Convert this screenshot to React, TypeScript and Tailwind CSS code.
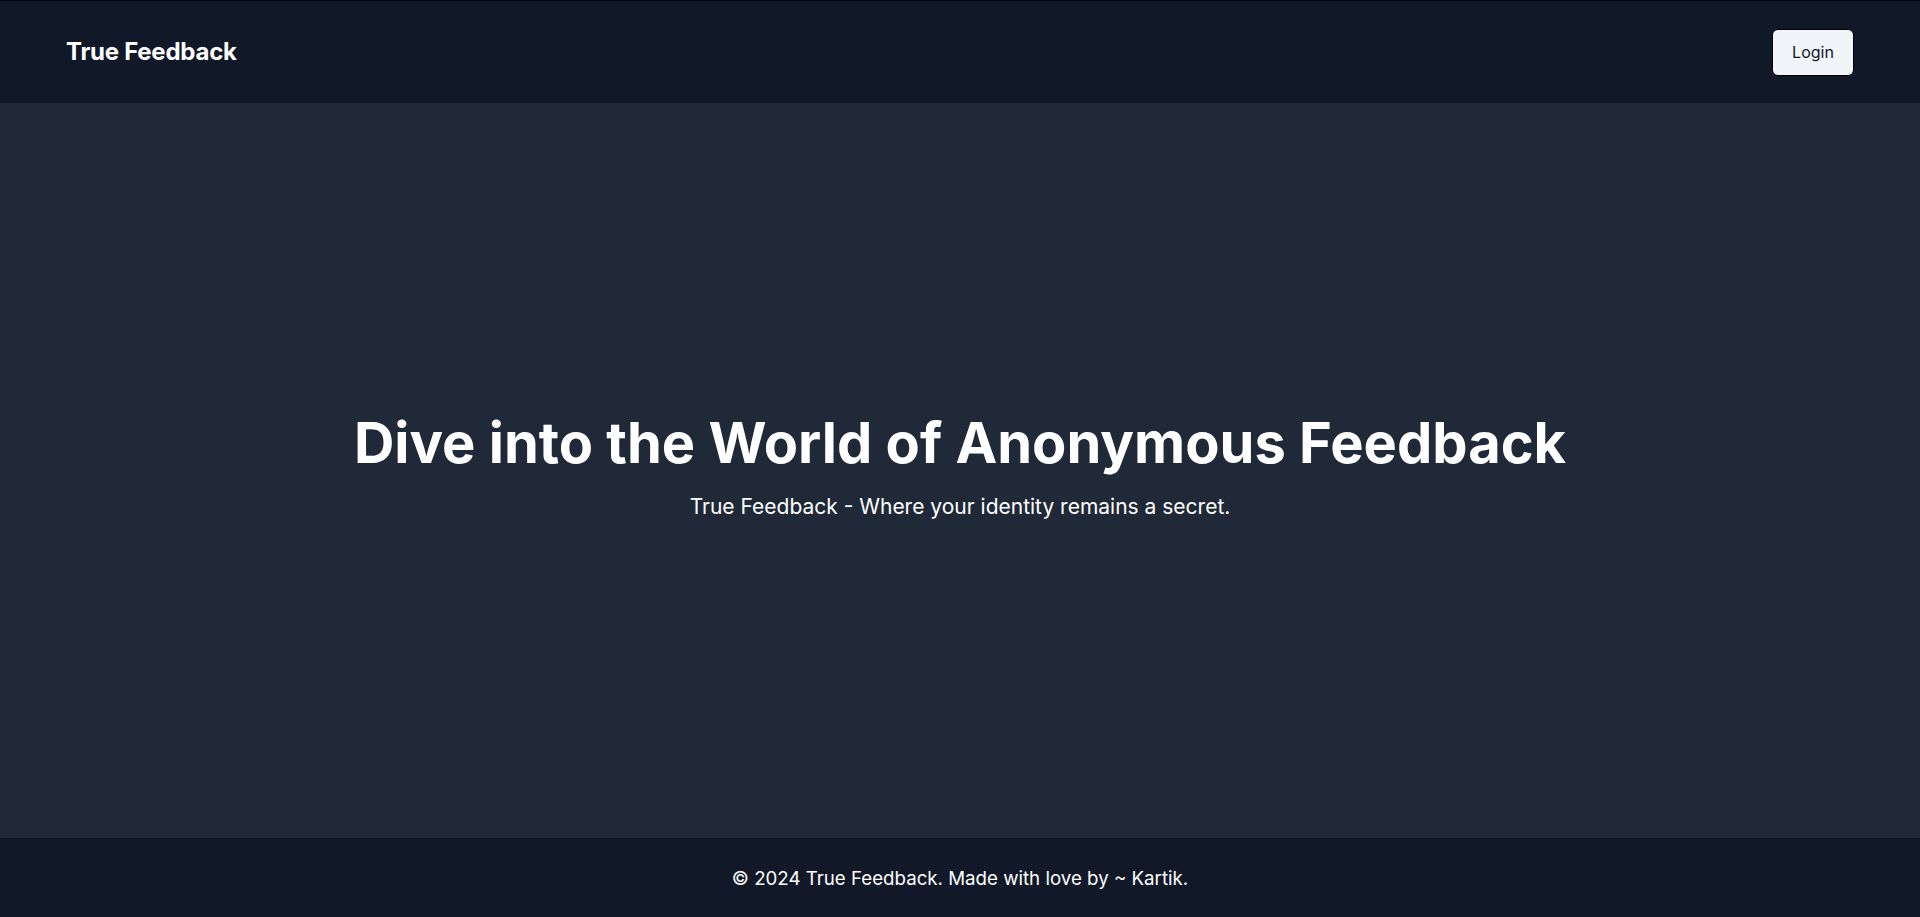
export default function App() {
  return (
    <div className="flex min-h-screen flex-col bg-[#1f2937] text-white font-['Inter',sans-serif]">
      <nav className="h-[103px] border-t border-[#030712] bg-[#111827] px-[66px] flex items-center justify-between">
        <a href="#" className="text-2xl font-bold tracking-[-0.01em]">True Feedback</a>
        <button className="h-[47px] w-[82px] rounded-md border border-black bg-[#f1f5f9] text-base text-[#0f172a]">
          Login
        </button>
      </nav>
      <main className="flex flex-1 flex-col items-center justify-center px-4 pb-[3px]">
        <section className="text-center">
          <h1 className="text-[56px] leading-none font-bold">Dive into the World of Anonymous Feedback</h1>
          <p className="mt-5 text-[21px]">True Feedback - Where your identity remains a secret.</p>
        </section>
      </main>
      <footer className="h-[79px] bg-[#111827] pt-1 flex items-center justify-center text-[18.7px]">
        © 2024 True Feedback. Made with love by ~ Kartik.
      </footer>
    </div>
  );
}
